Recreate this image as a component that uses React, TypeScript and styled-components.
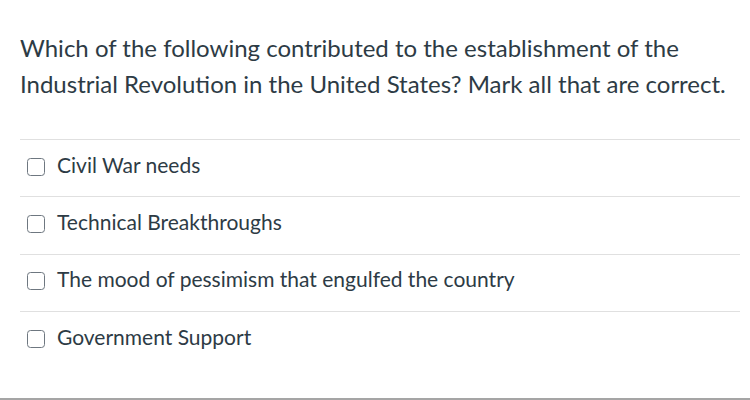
import React from 'react';
import styled, {createGlobalStyle} from 'styled-components';

const GlobalStyle = createGlobalStyle`
  html, body {
    margin: 0;
    padding: 0;
    background: #ffffff;
  }
  body {
    font-family: Lato, "Helvetica Neue", Arial, sans-serif;
    color: #2d3b45;
  }
`;

const Page = styled.div`
  width: 750px;
  height: 400px;
  box-sizing: border-box;
  display: flex;
  flex-direction: column;
  border-bottom: 2px solid #a5a5a5;
`;

const Body = styled.div`
  flex: 1;
  padding: 30px 10px 0 20px;
`;

const Question = styled.p`
  margin: 0 0 37px;
  font-size: 24px;
  line-height: 36px;
`;

const AnswerList = styled.div`
  display: flex;
  flex-direction: column;
`;

const AnswerRow = styled.label`
  display: flex;
  align-items: center;
  gap: 12px;
  height: 57.3px;
  box-sizing: border-box;
  border-top: 1px solid #e0e0e0;
  padding-left: 7px;
  padding-bottom: 8px;
  font-size: 21px;
`;

const Box = styled.span`
  width: 18px;
  height: 18px;
  box-sizing: border-box;
  border: 1.5px solid #6e7780;
  border-radius: 3.5px;
  flex-shrink: 0;
  margin-top: 5px;
`;

const answers = [
  'Civil War needs',
  'Technical Breakthroughs',
  'The mood of pessimism that engulfed the country',
  'Government Support',
];

export default function App() {
  return (
    <>
      <GlobalStyle />
      <Page>
        <Body>
          <Question>
            Which of the following contributed to the establishment of the Industrial Revolution in the United States?
            Mark all that are correct.
          </Question>
          <AnswerList>
            {answers.map((a) => (
              <AnswerRow key={a}>
                <Box />
                {a}
              </AnswerRow>
            ))}
          </AnswerList>
        </Body>
      </Page>
    </>
  );
}
